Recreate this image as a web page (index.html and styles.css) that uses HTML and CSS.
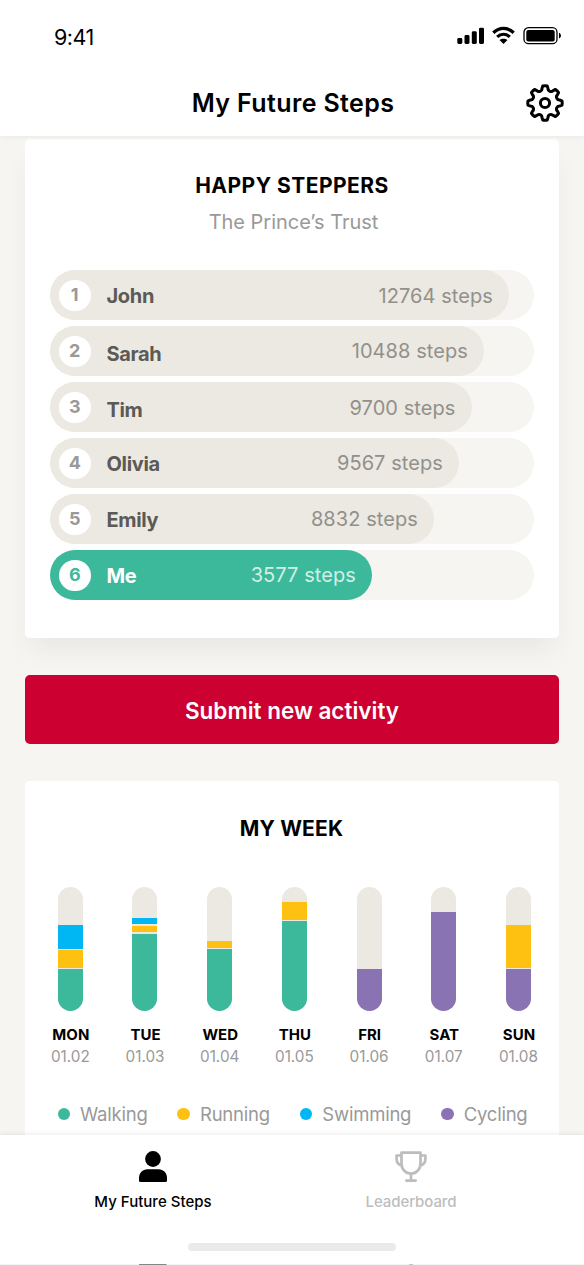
FILE: index.html
```html
<!DOCTYPE html>
<html lang="en">
<head>
<meta charset="utf-8">
<title>My Future Steps</title>
<link rel="stylesheet" href="styles.css">
</head>
<body>
<div class="app">
  <header class="top">
    <div class="status">
      <span class="clock">9:41</span>
      <svg class="status-icons" width="106" height="20" viewBox="0 0 106 20">
        <rect x="0.3" y="12" width="5" height="6" rx="1.4"/>
        <rect x="7.5" y="9" width="5" height="9" rx="1.4"/>
        <rect x="14.8" y="5.3" width="5" height="12.7" rx="1.4"/>
        <rect x="22" y="1.7" width="5" height="16.3" rx="1.4"/>
        <g fill="none" stroke="#000" stroke-width="3.3">
          <path d="M36.300 6.800C42.500 1 50.500 1 56.700 6.800"/>
          <path d="M40.200 10.900C44 7.400 49 7.400 52.800 10.900"/>
        </g>
        <path d="M46.500 18l-4-3.900c2.300-1.900 5.700-1.900 8 0z"/>
        <rect x="67" y="1.700" width="33" height="16" rx="4.500" fill="none" stroke="#000" stroke-width="1.300"/>
        <rect x="69.300" y="4" width="28.400" height="11.400" rx="2"/>
        <path d="M102 6.800c2.600 1 2.600 4.800 0 5.800z"/>
      </svg>
    </div>
    <div class="titlebar">
      <h1 class="title">My Future Steps</h1>
      <svg class="gear" width="40" height="40" viewBox="-20 -20 40 40">
        <path d="M-2.200-17Q0-17.500 2.200-17L3-14.600A3 3 0 0 0 8.200-12.450L10.460-13.580Q12.300-12.300 13.580-10.460L12.450-8.200A3 3 0 0 0 14.600-3L17-2.200Q17.500 0 17 2.200L14.600 3A3 3 0 0 0 12.450 8.200L13.580 10.460Q12.300 12.300 10.460 13.580L8.200 12.450A3 3 0 0 0 3 14.600L2.200 17Q0 17.500-2.200 17L-3 14.600A3 3 0 0 0-8.200 12.450L-10.460 13.580Q-12.300 12.300-13.580 10.460L-12.450 8.200A3 3 0 0 0-14.600 3L-17 2.200Q-17.500 0-17-2.200L-14.600-3A3 3 0 0 0-12.450-8.200L-13.580-10.460Q-12.300-12.300-10.460-13.580L-8.200-12.450A3 3 0 0 0-3-14.600Z"/>
        <circle r="4.600"/>
      </svg>
    </div>
  </header>

  <main class="content">
    <section class="card steppers">
      <h2 class="heading happy">HAPPY STEPPERS</h2>
      <p class="org">The Prince’s Trust</p>
      <ol class="ranking">
        <li class="track"><div class="fill" style="width:459px"><b class="rank">1</b><b class="name">John</b><span class="steps">12764 steps</span></div></li>
        <li class="track"><div class="fill" style="width:434px"><b class="rank">2</b><b class="name low">Sarah</b><span class="steps high">10488 steps</span></div></li>
        <li class="track"><div class="fill" style="width:421.500px"><b class="rank">3</b><b class="name low">Tim</b><span class="steps">9700 steps</span></div></li>
        <li class="track"><div class="fill" style="width:409px"><b class="rank">4</b><b class="name">Olivia</b><span class="steps high">9567 steps</span></div></li>
        <li class="track"><div class="fill" style="width:384px"><b class="rank">5</b><b class="name">Emily</b><span class="steps high">8832 steps</span></div></li>
        <li class="track"><div class="fill me" style="width:322px"><b class="rank">6</b><b class="name">Me</b><span class="steps high">3577 steps</span></div></li>
      </ol>
    </section>

    <button class="submit"><span>Submit new activity</span></button>

    <section class="card week">
      <h2 class="heading my-week">MY WEEK</h2>
      <div class="days">
        <div class="day"><div class="bar"><i class="swim" style="height:23.500px"></i><i class="run" style="height:17.500px"></i><i class="walk" style="height:42.300px"></i></div><b>MON</b><span>01.02</span></div>
        <div class="day"><div class="bar"><i class="swim" style="height:6.300px"></i><i class="run" style="height:6.300px"></i><i class="walk" style="height:77.700px"></i></div><b>TUE</b><span>01.03</span></div>
        <div class="day"><div class="bar"><i class="run" style="height:6.500px"></i><i class="walk" style="height:62.300px"></i></div><b>WED</b><span>01.04</span></div>
        <div class="day"><div class="bar"><i class="run" style="height:17.500px"></i><i class="walk" style="height:90.300px"></i></div><b>THU</b><span>01.05</span></div>
        <div class="day"><div class="bar"><i class="cycle" style="height:42.300px"></i></div><b>FRI</b><span>01.06</span></div>
        <div class="day"><div class="bar"><i class="cycle" style="height:99.600px"></i></div><b>SAT</b><span>01.07</span></div>
        <div class="day"><div class="bar"><i class="run" style="height:42.300px"></i><i class="cycle" style="height:42.300px"></i></div><b>SUN</b><span>01.08</span></div>
      </div>
      <div class="legend">
        <span class="key"><i class="walk"></i>Walking</span>
        <span class="key"><i class="run"></i>Running</span>
        <span class="key"><i class="swim"></i>Swimming</span>
        <span class="key"><i class="cycle"></i>Cycling</span>
      </div>
    </section>
  </main>

  <nav class="tabs">
    <div class="tab-row">
      <a class="tab active">
        <svg width="34" height="34" viewBox="0 0 34 34"><circle cx="17" cy="9" r="7.900"/><path d="M3 30.500V28c0-5 3.500-8.700 8.500-8.700h11c5 0 8.500 3.700 8.500 8.700v2.500q0 1.500-1.500 1.500h-25Q3 32 3 30.500z"/></svg>
        <span>My Future Steps</span>
      </a>
      <a class="tab">
        <svg class="trophy" width="34" height="34" viewBox="0 0 34 34"><path d="M7.500 2.600h19v11.500a9.500 9.500 0 0 1-19 0zM7.500 5.500H2.600v3.200c0 3.800 1.700 6.200 5.500 6.800M26.500 5.500h4.900v3.200c0 3.800-1.700 6.200-5.500 6.800M17 24v6.500M12.300 30.600h9.400"/></svg>
        <span>Leaderboard</span>
      </a>
    </div>
    <div class="home"></div>
    <svg class="edge" width="584" height="1" viewBox="0 0 584 1"><rect width="584" height="1" fill="#f4f4f4"/><rect x="139" width="27.500" height="1" fill="#858585"/><rect x="409" width="4" height="1" fill="#c4c4c4"/></svg>
  </nav>
</div>
</body>
</html>
```
FILE: styles.css
```css
* { box-sizing: border-box; }
body { margin: 0; background: #f6f5f2; font-family: Inter, "Liberation Sans", sans-serif; color: #000; }
h1, h2, p, ol { margin: 0; padding: 0; }
.app { height: 1265px; display: flex; flex-direction: column; overflow: hidden; }

.top { height: 136px; flex: none; background: #fff; position: relative; z-index: 2; box-shadow: 0 1px 5px rgba(0,0,0,.05); }
.status { height: 74px; display: flex; justify-content: space-between; padding: 26px 21px 0 54px; }
.clock { font-size: 21.500px; line-height: 22px; letter-spacing: -.5px; }
.status-icons { flex: none; }
.titlebar { display: grid; grid-template-columns: 60px 1fr 60px; align-items: center; height: 58px; }
.title { grid-column: 2; text-align: center; font-size: 25px; font-weight: 600; line-height: 30px; letter-spacing: .38px; margin-left: 2px; white-space: nowrap; }
.gear { margin-left: 0.700px; fill: none; stroke: #000; stroke-width: 3; stroke-linejoin: round; }

.content { flex: 1; min-height: 0; padding: 3px 25px 0; overflow: hidden; }
.card { background: #fff; border-radius: 5px; text-align: center; }
.steppers { height: 499px; padding: 33px 25px 0; box-shadow: 0 16px 24px -6px rgba(60,58,45,.08); }
.heading { font-size: 21px; line-height: 28px; font-weight: 700; white-space: nowrap; }
.happy { letter-spacing: .48px; }
.org { margin-top: 8px; font-size: 20px; line-height: 28px; color: #999; letter-spacing: -.02px; padding-left: 3px; }
.ranking { margin-top: 34.400px; display: grid; gap: 6px; list-style: none; }
.track { height: 50px; border-radius: 25px; background: #f6f5f2; }
.fill { height: 50px; border-radius: 25px; background: #ebe9e1; display: flex; align-items: center; padding: 0 16px 0 9px; white-space: nowrap; }
.rank { width: 31.500px; height: 31.500px; border-radius: 50%; background: #fff; color: #999; font-size: 18px; line-height: 30.500px; }
.name { margin: 2px 0 0 16px; font-size: 20px; line-height: 24px; color: #5b5a57; letter-spacing: -.34px; }
.name.low { margin-top: 5px; }
.steps { margin: 2px 0 0 auto; font-size: 20px; line-height: 24px; color: #92908b; letter-spacing: .08px; }
.steps.high { margin-top: 0; }
.me { background: #3cb99b; }
.me .rank { color: #3cb99b; }
.me .name { color: #fff; }
.me .steps { color: #d0f0e6; }

.submit { display: block; width: 534px; height: 69px; margin: 37px 0; padding: 3px 0 0; border: 0; border-radius: 5px; background: #cc0031; color: #fff; font: 600 22.500px/28px Inter, sans-serif; }

.week { height: 420px; padding: 34px 6px 0 12px; }
.my-week { margin-right: 7px; letter-spacing: .15px; }
.days { margin: 44px 0 0 -3.500px; display: grid; grid-template-columns: repeat(7, 74.700px); }
.day { display: flex; flex-direction: column; align-items: center; }
.bar { width: 25px; height: 124.400px; border-radius: 12.500px; overflow: hidden; background: #ebe9e1; display: flex; flex-direction: column; justify-content: flex-end; gap: 1.500px; margin-right: 1.200px; }
.bar i { display: block; flex: none; }
.day b { margin-top: 13.600px; font-size: 15px; line-height: 20px; }
.day span { margin: 2.200px 1px 0 0; font-size: 15.300px; line-height: 20px; color: #999; }
.walk { background: #3cb99b; }
.run { background: #fec111; }
.swim { background: #00b7f4; }
.cycle { background: #8973b3; }
.legend { margin: 34.800px 25.500px 0 20.500px; display: flex; justify-content: space-between; color: #999; font-size: 18.500px; line-height: 24px; letter-spacing: -.22px; }
.key { display: flex; align-items: center; gap: 10px; }
.key i { width: 12.500px; height: 12.500px; border-radius: 50%; }

.tabs { height: 130px; flex: none; background: #fff; position: relative; z-index: 2; box-shadow: 0 -1px 5px rgba(0,0,0,.08); display: flex; flex-direction: column; align-items: center; }
.tab-row { display: grid; grid-template-columns: 258px 258px; width: 516px; margin-right: 20px; height: 108px; padding-top: 15px; }
.tab { display: flex; flex-direction: column; align-items: center; font-size: 15px; line-height: 20px; font-weight: 500; color: #bdbdbd; white-space: nowrap; }
.tab span { margin-top: 8px; letter-spacing: -.08px; }
.tab.active span { letter-spacing: .02px; }
.active { color: #000; }
.trophy { fill: none; stroke: #bdbdbd; stroke-width: 2.700; stroke-linejoin: round; stroke-linecap: round; }
.home { width: 208px; height: 8px; border-radius: 4px; background: #eaeaea; }
.edge { margin-top: auto; flex: none; }
```
